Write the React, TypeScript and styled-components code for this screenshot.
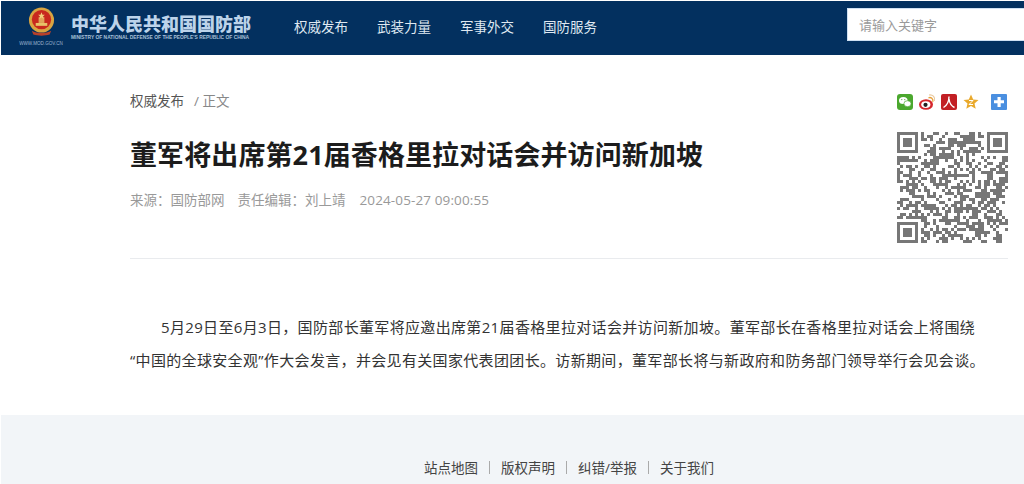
import React from "react";
import styled, { createGlobalStyle } from "styled-components";

const Global = createGlobalStyle`
  html, body { margin: 0; padding: 0; background: #fff; overflow: hidden; }
  body { font-family: "Open Sans", "Noto Sans CJK SC", sans-serif; }
`;
const Page = styled.div`
  width: 1024px;
  height: 484px;
  overflow: hidden;
  display: flex;
  flex-direction: column;
`;
const Header = styled.header`
  height: 54px;
  margin: 1px 0 0 1px;
  background: #03305f;
  display: flex;
  align-items: flex-start;
  flex-shrink: 0;
`;
const Brand = styled.div`
  width: 293px;
  padding: 6px 0 0 19px;
  display: flex;
  align-items: flex-start;
  gap: 9px;
  box-sizing: border-box;
`;
const Emblem = styled.div`
  width: 42px;
  display: flex;
  flex-direction: column;
  align-items: center;
`;
const EmblemUrl = styled.span`
  font: 4.6px/5px "Liberation Sans", sans-serif;
  color: #9fb6cf;
  white-space: nowrap;
  margin-top: 4px;
`;
const BrandText = styled.div`
  display: flex;
  flex-direction: column;
  padding-top: 4px;
`;
const BrandCn = styled.span`
  font-family: "Noto Sans CJK SC", sans-serif;
  font-size: 18px;
  line-height: 24px;
  font-weight: 900;
  color: #bcd3ea;
  white-space: nowrap;
`;
const BrandEn = styled.span`
  font: bold 4.9px/6px "Liberation Sans", sans-serif;
  color: #a9c0d8;
  white-space: nowrap;
`;
const Nav = styled.nav`
  display: flex;
  gap: 29px;
  padding-top: 16px;
`;
const NavItem = styled.a`
  font-size: 13.5px;
  line-height: 20px;
  color: #dfe8f1;
`;
const Search = styled.div`
  margin: 7px 0 0 auto;
  width: 177px;
  height: 33px;
  background: #fff;
  border: 1px solid #cfe0f2;
  border-right: 0;
  box-sizing: border-box;
  display: flex;
  align-items: center;
  padding-left: 11px;
  font-size: 13px;
  color: #9a9a9a;
`;
const Main = styled.main`
  flex: 1;
  padding: 36px 16px 0 130px;
`;
const Top = styled.div`
  display: flex;
  justify-content: space-between;
  border-bottom: 1px solid #e9ebee;
  height: 167px;
`;
const Crumb = styled.div`
  font-size: 13.5px;
  line-height: 20px;
  color: #555;
`;
const CrumbSub = styled.span`
  color: #888;
  margin-left: 10px;
`;
const Title = styled.h1`
  margin: 24px 0 0;
  font-size: 27px;
  line-height: 40px;
  font-weight: 700;
  letter-spacing: 0.1px;
  color: #1c1c1c;
  white-space: nowrap;
`;
const Meta = styled.div`
  display: flex;
  margin-top: 15px;
  font-size: 13.5px;
  line-height: 20px;
  color: #999;
`;
const MetaItem = styled.span`
  margin-right: 13px;
`;
const MetaDate = styled.span`
  margin-left: 1px;
  letter-spacing: 0.12px;
`;
const Aside = styled.div`
  width: 111px;
  display: flex;
  flex-direction: column;
`;
const Share = styled.div`
  display: flex;
  align-items: center;
  height: 18px;
  margin-top: 2px;
  margin-bottom: 21px;
`;
const ShareIcon = styled.svg<{ $gap?: number }>`
  display: block;
  margin-left: ${(p) => p.$gap ?? 0}px;
  flex-shrink: 0;
`;
const Body = styled.p`
  margin: 52px 0 0;
  width: 878px;
  font-size: 15px;
  line-height: 33px;
  letter-spacing: 0.34px;
  color: #333;
  white-space: nowrap;
`;
const Indent = styled.span`
  display: inline-block;
  width: 31px;
`;
const Footer = styled.footer`
  height: 69px;
  background: #f2f5f8;
  margin-left: 1px;
  display: flex;
  justify-content: center;
  padding: 41px 16px 0 129px;
  box-sizing: border-box;
  flex-shrink: 0;
`;
const FooterLinks = styled.div`
  display: flex;
  align-items: center;
  height: 22px;
  font-size: 13.5px;
  color: #444;
`;
const Sep = styled.i`
  width: 1px;
  height: 13px;
  background: #aaa;
  margin: 0 11px;
`;

function QR() {
  const n = 37;
  const cell = 3;
  const rects: React.ReactElement[] = [];
  let s = 20240527;
  const rnd = () => {
    s = (s * 1664525 + 1013904223) >>> 0;
    return (s >>> 16) / 65536;
  };
  const finder = (x: number, y: number) => x >= 0 && x < 8 && y >= 0 && y < 8;
  const inFinder = (x: number, y: number) =>
    finder(x, y) || finder(x - (n - 8), y) || finder(x, y - (n - 8));
  for (let y = 0; y < n; y++) {
    for (let x = 0; x < n; x++) {
      if (inFinder(x, y)) continue;
      if (rnd() > 0.5) {
        rects.push(<rect key={`${x}-${y}`} x={x * cell} y={y * cell} width={cell} height={cell} />);
      }
    }
  }
  const F = ({ x, y }: { x: number; y: number }) => (
    <g transform={`translate(${x * cell} ${y * cell})`}>
      <path fillRule="evenodd" d="M0 0h21v21H0zM3 3v15h15V3z" />
      <rect x="6" y="6" width="9" height="9" />
    </g>
  );
  return (
    <svg width="111" height="111" viewBox="0 0 111 111" fill="#777" style={{ display: "block" }}>
      {rects}
      <F x={0} y={0} />
      <F x={n - 7} y={0} />
      <F x={0} y={n - 7} />
    </svg>
  );
}

export default function App() {
  return (
    <Page>
      <Global />
      <Header>
        <Brand>
          <Emblem>
            <svg width="27" height="30" viewBox="0 0 28 30">
              <circle cx="14" cy="13" r="13" fill="#d9a441" />
              <circle cx="14" cy="12.500" r="10" fill="#c8281e" />
              <path d="M8 16h12v3H8z" fill="#e8c268" />
              <path d="M11 10h6v6h-6z" fill="#e8c268" opacity=".8" />
              <path d="M14 5l1 2.400 2.400.2-1.800 1.600.6 2.400-2.200-1.300-2.200 1.300.6-2.400-1.800-1.600 2.400-.2z" fill="#f1d07a" />
              <path d="M4 24c5 3 15 3 20 0l-1.500 4c-5 1.600-12 1.600-17 0z" fill="#b8402a" />
            </svg>
            <EmblemUrl>WWW.MOD.GOV.CN</EmblemUrl>
          </Emblem>
          <BrandText>
            <BrandCn>中华人民共和国国防部</BrandCn>
            <BrandEn>MINISTRY OF NATIONAL DEFENSE OF THE PEOPLE'S REPUBLIC OF CHINA</BrandEn>
          </BrandText>
        </Brand>
        <Nav>
          <NavItem>权威发布</NavItem>
          <NavItem>武装力量</NavItem>
          <NavItem>军事外交</NavItem>
          <NavItem>国防服务</NavItem>
        </Nav>
        <Search>请输入关键字</Search>
      </Header>
      <Main>
        <Top>
          <div>
            <Crumb>
              权威发布<CrumbSub>/ 正文</CrumbSub>
            </Crumb>
            <Title>董军将出席第21届香格里拉对话会并访问新加坡</Title>
            <Meta>
              <MetaItem>来源：国防部网</MetaItem>
              <MetaItem>责任编辑：刘上靖</MetaItem>
              <MetaDate>2024-05-27 09:00:55</MetaDate>
            </Meta>
          </div>
          <Aside>
            <Share>
              <ShareIcon width="16" height="16" viewBox="0 0 16 16">
                <rect width="16" height="16" rx="3" fill="#4ba82e" />
                <ellipse cx="6.300" cy="6.500" rx="4.300" ry="3.500" fill="#fff" />
                <ellipse cx="10.500" cy="9.700" rx="3.600" ry="3" fill="#fff" stroke="#4ba82e" strokeWidth=".7" />
                <circle cx="4.800" cy="5.600" r=".6" fill="#4ba82e" />
                <circle cx="7.800" cy="5.600" r=".6" fill="#4ba82e" />
              </ShareIcon>
              <ShareIcon $gap={6} width="16" height="16" viewBox="0 0 16 16">
                <ellipse cx="7" cy="10.500" rx="7" ry="5.300" fill="#d5262c" />
                <ellipse cx="6.800" cy="10.600" rx="4.600" ry="3.400" fill="#fff" />
                <circle cx="6.500" cy="10.800" r="2.100" fill="#222" />
                <path d="M9.500 3.800c2.500-1 5 1 4.300 4" fill="none" stroke="#e8a13a" strokeWidth="1.300" />
                <path d="M10 1c3.500-.7 6.300 2 5.600 6" fill="none" stroke="#e8c9a0" strokeWidth="1.100" />
              </ShareIcon>
              <ShareIcon $gap={6} width="16" height="16" viewBox="0 0 16 16">
                <rect width="16" height="16" rx="2" fill="#c21f24" />
                <path d="M8 2.500c0 4.500-1.500 8.500-5.500 11M8 5c.5 4 2.500 7 5.500 8.500" fill="none" stroke="#fff" strokeWidth="1.400" />
              </ShareIcon>
              <ShareIcon $gap={6} width="16" height="16" viewBox="0 0 16 16">
                <path d="M8 .5l2.200 4.900 5.300.5-4 3.600 1.200 5.300L8 12.100l-4.700 2.700 1.200-5.300-4-3.600 5.300-.5z" fill="#e9a92c" />
                <path d="M6 6.500h4L6 10.500h4" fill="none" stroke="#fff" strokeWidth="1" />
              </ShareIcon>
              <ShareIcon $gap={12} width="16" height="16" viewBox="0 0 16 16">
                <rect width="16" height="16" rx="1" fill="#4a8fe0" />
                <path d="M6.500 3h3.200v3.300H13v3H9.700V13H6.500V9.300H3v-3h3.500z" fill="#fff" />
              </ShareIcon>
            </Share>
            <QR />
          </Aside>
        </Top>
        <Body>
          <Indent />5月29日至6月3日，国防部长董军将应邀出席第21届香格里拉对话会并访问新加坡。董军部长在香格里拉对话会上将围绕
          <br />
          “中国的全球安全观”作大会发言，并会见有关国家代表团团长。访新期间，董军部长将与新政府和防务部门领导举行会见会谈。
        </Body>
      </Main>
      <Footer>
        <FooterLinks>
          <span>站点地图</span>
          <Sep />
          <span>版权声明</span>
          <Sep />
          <span>纠错/举报</span>
          <Sep />
          <span>关于我们</span>
        </FooterLinks>
      </Footer>
    </Page>
  );
}
